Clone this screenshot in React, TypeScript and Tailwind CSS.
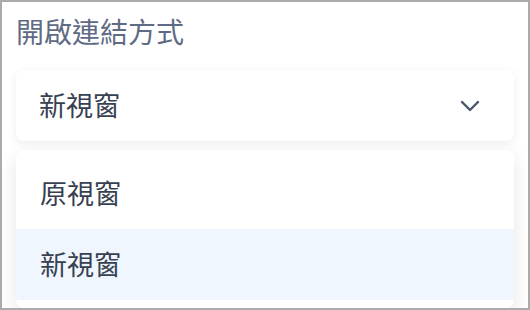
import { ChevronDown } from "lucide-react";

const options = ["原視窗", "新視窗"];

export default function App() {
	const selected = "新視窗";

	return (
		<div
			className="w-[530px] h-[310px] border-2 border-[#ababab] bg-white overflow-hidden"
			style={{ fontFamily: '"Noto Sans CJK TC", "Noto Sans", sans-serif' }}
		>
			<div className="px-[14px] pt-[12px] flex flex-col">
				<label className="text-[28px] leading-[34px] text-[#5f6b84]">
					開啟連結方式
				</label>
				<button className="mt-[22px] h-[71px] flex items-center justify-between pl-[23px] pr-[28px] bg-white rounded-lg shadow-[0_2px_10px_rgba(0,0,0,0.07)] text-left">
					<span className="text-[27px] text-[#374151]">{selected}</span>
					<ChevronDown size={32} strokeWidth={1.8} className="text-[#475569]" />
				</button>
				<ul className="mt-[9px] py-2 bg-white rounded-lg shadow-[0_6px_20px_rgba(0,0,0,0.1)]">
					{options.map((o) => (
						<li
							key={o}
							className={
								"h-[71px] flex items-center px-6 text-[27px] text-[#374151] " +
								(o === selected ? "bg-[#f0f6fe]" : "")
							}
						>
							{o}
						</li>
					))}
				</ul>
			</div>
		</div>
	);
}
